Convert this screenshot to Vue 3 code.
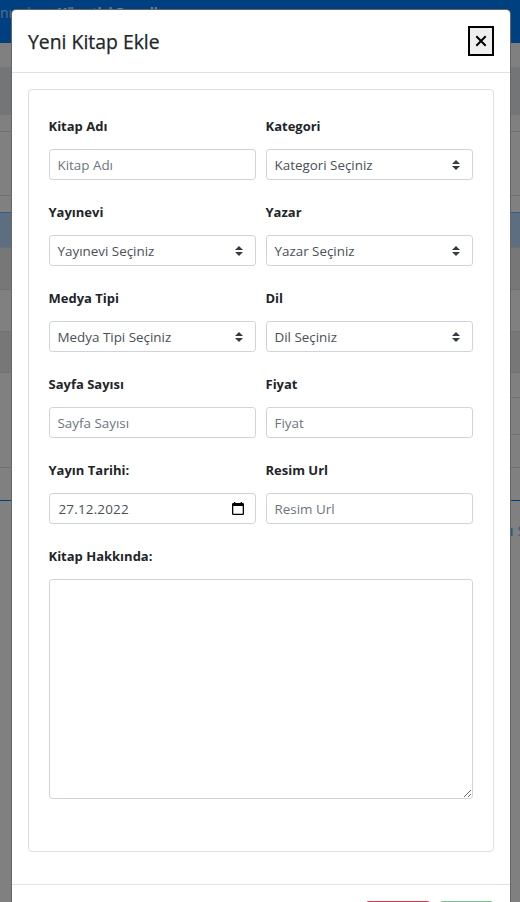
<script setup>
const fields = [
  { label: 'Kitap Adı', type: 'text', text: 'Kitap Adı' },
  { label: 'Kategori', type: 'select', text: 'Kategori Seçiniz' },
  { label: 'Yayınevi', type: 'select', text: 'Yayınevi Seçiniz' },
  { label: 'Yazar', type: 'select', text: 'Yazar Seçiniz' },
  { label: 'Medya Tipi', type: 'select', text: 'Medya Tipi Seçiniz' },
  { label: 'Dil', type: 'select', text: 'Dil Seçiniz' },
  { label: 'Sayfa Sayısı', type: 'text', text: 'Sayfa Sayısı' },
  { label: 'Fiyat', type: 'text', text: 'Fiyat' },
  { label: 'Yayın Tarihi:', type: 'date', text: '27.12.2022' },
  { label: 'Resim Url', type: 'text', text: 'Resim Url' },
]
// Height and style of each row of the page behind the dialog
const bands = [
  [24, 'plain'], [48, 'head'], [16, 'plain'], [64, 'lined'], [17, 'lined'],
  [35, 'active'], [42, 'shade'], [42, 'lined'], [41, 'shade'],
  [25, 'lined'], [37, 'lined-right'], [33, 'lined-right'], [33, 'lined'],
]
</script>

<template>
  <div class="page">
    <nav class="topbar"><span class="brand">nın</span><span>dan</span><b>Yönetici Paneli</b></nav>
    <div v-for="(b, i) in bands" :key="i" class="band" :class="b[1]" :style="{ height: b[0] + 'px' }"></div>
    <div class="below"><span>ı</span><span class="cut">S</span></div>

    <section class="modal">
      <header>
        <h5>Yeni Kitap Ekle</h5>
        <button class="close" aria-label="Kapat">
          <svg width="12" height="12" viewBox="0 0 12 12"><path d="M1.300 1.300 10.700 10.700M10.700 1.300 1.300 10.700" fill="none" stroke="#000" stroke-width="2" /></svg>
        </button>
      </header>
      <div class="body">
        <div class="card">
          <div class="grid">
            <div v-for="f in fields" :key="f.label" class="field">
              <label>{{ f.label }}</label>
              <input v-if="f.type === 'text'" class="control" :placeholder="f.text" />
              <div v-else class="control pick" :class="f.type">
                <span>{{ f.text }}</span>
                <svg v-if="f.type === 'select'" width="8" height="10" viewBox="0 0 4 5"><path fill="#343a40" d="M2 0 0 2h4zm0 5L0 3h4z" /></svg>
                <svg v-else width="12" height="13" viewBox="0 0 12 13"><path fill="#000" fill-rule="evenodd" d="M2 0h1.300v1h5.400V0H10v1h.8Q12 1 12 2.200v9.600Q12 13 10.800 13H1.200Q0 13 0 11.800V2.200Q0 1 1.200 1H2zM1.300 4v7.700h9.400V4z" /></svg>
              </div>
            </div>
          </div>
          <div class="field">
            <label>Kitap Hakkında:</label>
            <textarea></textarea>
          </div>
        </div>
      </div>
      <footer>
        <button class="btn red" aria-label="Kapat"></button>
        <button class="btn green" aria-label="Ekle"></button>
      </footer>
    </section>
  </div>
</template>

<style>
body { margin: 0; overflow: hidden; }
</style>
<style scoped>
* { box-sizing: border-box; }
.page { position: relative; height: 902px; overflow: hidden; background: #808080; font-family: "Open Sans", "Noto Sans", sans-serif; color: #212529; }
.topbar { height: 43px; background: #003f80; color: #56718d; font-size: 14px; line-height: 20px; padding-top: 3px; display: flex; white-space: nowrap; }
.topbar span { width: 22px; }
.topbar b { margin-left: 14px; color: #718395; font-size: 13.5px; }
.topbar .brand { margin-left: 0; }
.lined, .shade { border-top: 1px solid #6f7071; }
.head { background: #747577; }
.shade { background: #777; }
.active { background: #5c6e80; border-top: 1px solid #315c89; }
.lined-right { background: linear-gradient(#6f7071, #6f7071) right top / 20px 1px no-repeat; }
.below { height: 402px; border-top: 1px solid #003f80; padding: 17px 0 0 509px; display: flex; gap: 4px; font-size: 15px; line-height: 24px; font-weight: 700; color: #2d598c; }
.below .cut { color: #4e5582; font-weight: 400; }

.modal { position: absolute; left: 12px; top: 10px; width: 498px; height: 950px; background: #fff; border-radius: 4px; box-shadow: 0 0 0 1px #666; }
header { height: 63px; padding: 16px; display: flex; justify-content: space-between; border-bottom: 1px solid #dee2e6; }
h5 { margin: 0; font-size: 19.4px; line-height: 32px; font-weight: 400; -webkit-text-stroke: .25px #212529; }
.close { width: 26px; height: 30px; padding: 0; border: 2px solid #000; border-radius: 0; background: #efefef; display: grid; place-items: center; }
.body { padding: 16px 16px 32px; }
.card { height: 763px; border: 1px solid #dfdfdf; border-radius: 4px; padding: 20px; }
.grid { display: grid; grid-template-columns: 207px 207px; column-gap: 10px; }
.field { display: flex; flex-direction: column; height: 86px; }
label { flex: none; height: 39px; padding-top: 6px; font-size: 13px; line-height: 21px; font-weight: 700; margin-left: -0.5px; }
.control { height: 31px; width: 207px; border: 1px solid #ced4da; border-radius: 3.2px; padding: 0 7.5px; font: 13.4px/29px "Open Sans", "Noto Sans", sans-serif; color: #495057; background: #fff; outline: none; }
.control::placeholder { color: #6c757d; opacity: 1; }
.pick { display: flex; justify-content: space-between; align-items: center; padding-right: 12px; }
.pick span { padding-top: 1px; }
.date { padding-right: 11px; padding-left: 8.5px; letter-spacing: .2px; }
textarea { display: block; width: 424px; height: 220px; flex: none; border: 1px solid #ced4da; border-radius: 3.2px; margin: 0; resize: vertical; }
footer { height: 80px; border-top: 1px solid #dee2e6; padding: 16px 17px; display: flex; justify-content: flex-end; gap: 10px; }
.btn { height: 31px; border: 0; border-radius: 3px; }
.red { width: 64px; background: #dc3545; }
.green { width: 53px; background: #71c285; }
</style>
